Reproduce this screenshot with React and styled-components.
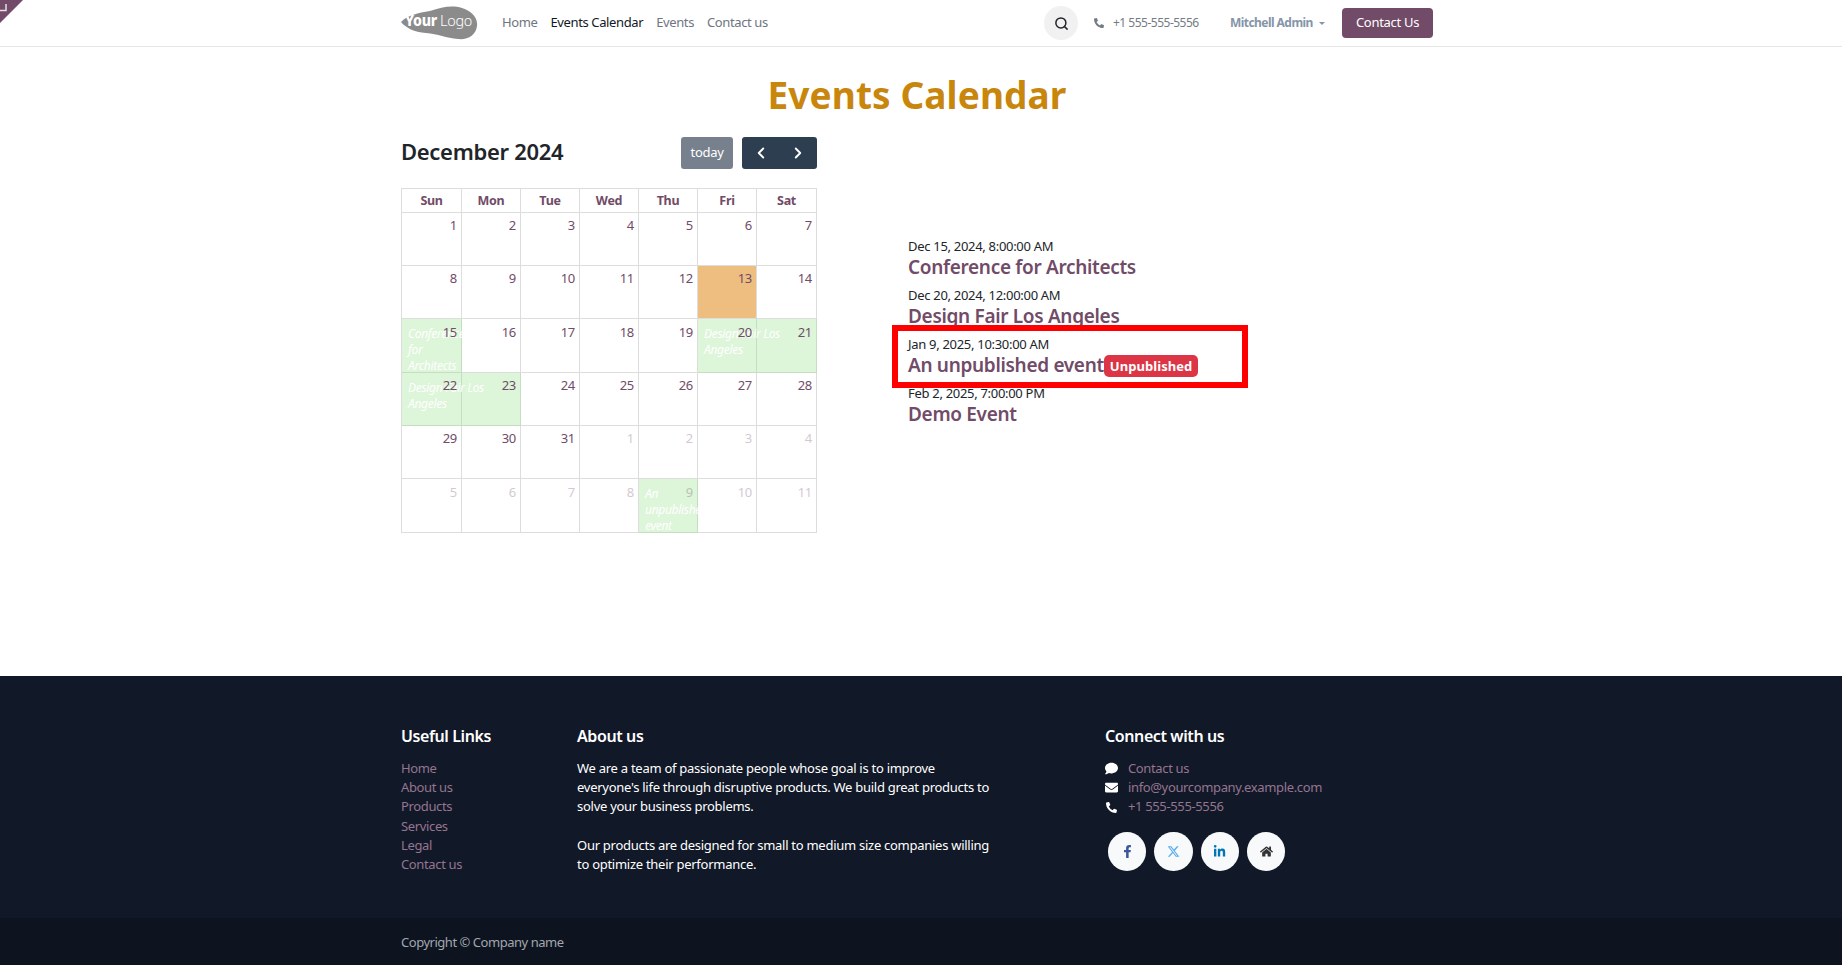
import React from "react";
import styled, { createGlobalStyle } from "styled-components";
import {
  FaComment,
  FaEnvelope,
  FaFacebookF,
  FaHome,
  FaLinkedinIn,
  FaPhoneAlt,
} from "react-icons/fa";
import { FaXTwitter } from "react-icons/fa6";
import { ChevronLeft, ChevronRight, Search } from "lucide-react";

const PURPLE = "#714b67";

const GlobalStyle = createGlobalStyle`
  html, body {
    margin: 0;
    padding: 0;
    background: #fff;
    font-family: "Noto Sans", "Open Sans", sans-serif;
    font-size: 13px;
    line-height: 19.5px;
    color: #212529;
    letter-spacing: -0.3px;
  }
  * { box-sizing: border-box; }
`;

const Page = styled.div`
  position: relative;
  min-height: 965px;
  display: flex;
  flex-direction: column;
`;

const Ribbon = styled.svg`
  position: absolute;
  left: 0;
  top: 0;
`;

const Header = styled.header`
  height: 47px;
  border-bottom: 1px solid #e6e6e6;
  padding: 0 409px 0 400px;
  display: flex;
  align-items: center;
`;

const NavLink = styled.a`
  color: ${(p) => (p.$active ? "#111827" : "#6f7680")};
  margin-right: ${(p) => p.$gap}px;
  letter-spacing: -0.38px;
`;

const Nav = styled.nav`
  display: flex;
  margin-left: 24px;
  flex: 1;
`;

const SearchButton = styled.div`
  width: 34px;
  height: 34px;
  border-radius: 50%;
  background: #f1f1f1;
  color: #212529;
  display: flex;
  align-items: center;
  justify-content: center;
  margin-right: 16px;
`;

const PhoneLink = styled.div`
  display: flex;
  align-items: center;
  gap: 9px;
  color: #737b84;
  font-size: 12px;
  letter-spacing: -0.5px;
  width: 136px;
`;

const UserMenu = styled.div`
  display: flex;
  align-items: center;
  gap: 6px;
  color: #8595a8;
  font-size: 12px;
  font-weight: 700;
  letter-spacing: -0.55px;
  width: 112px;
`;

const Caret = styled.span`
  border-top: 3.5px solid #8595a8;
  border-left: 3.5px solid transparent;
  border-right: 3.5px solid transparent;
`;

const ContactButton = styled.a`
  width: 91px;
  height: 30px;
  border-radius: 4px;
  background: ${PURPLE};
  color: #fff;
  display: flex;
  align-items: center;
  justify-content: center;
`;

const Main = styled.main`
  flex: 1;
  padding: 0 401px;
`;

const Title = styled.h1`
  margin: 26px 0 0;
  padding-right: 8px;
  text-align: center;
  font-size: 37px;
  line-height: 44px;
  font-weight: 700;
  color: #c8860d;
  letter-spacing: 0.1px;
`;

const Columns = styled.div`
  display: grid;
  grid-template-columns: 416px 1fr;
  column-gap: 91px;
`;

const Toolbar = styled.div`
  display: flex;
  align-items: center;
  margin-top: 20px;
  height: 32px;
  margin-bottom: 19px;
`;

const MonthTitle = styled.h2`
  margin: 0 0 2px;
  flex: 1;
  font-size: 22px;
  font-weight: 600;
  color: #212529;
  letter-spacing: -0.3px;
`;

const TodayButton = styled.div`
  width: 52px;
  height: 32px;
  border-radius: 3px;
  background: #77818d;
  color: #fff;
  display: flex;
  align-items: center;
  justify-content: center;
  margin-right: 9px;
`;

const ArrowGroup = styled.div`
  width: 75px;
  height: 32px;
  border-radius: 3px;
  background: #2c3e50;
  color: #fff;
  display: flex;
  align-items: center;
  justify-content: space-around;
`;

const Calendar = styled.div`
  border-top: 1px solid #ddd;
  border-left: 1px solid #ddd;
`;

const Row = styled.div`
  display: grid;
  grid-template-columns: 60px repeat(5, 59px) 60px;
  height: ${(p) => p.$height}px;
`;

const HeadCell = styled.div`
  border-right: 1px solid #ddd;
  border-bottom: 1px solid #ddd;
  text-align: center;
  font-size: 12.5px;
  line-height: 23px;
  font-weight: 700;
  color: ${PURPLE};
`;

const DayCell = styled.div`
  grid-row: 1;
  grid-column: ${(p) => p.$col};
  min-width: 0;
  border-right: 1px solid #ddd;
  border-bottom: 1px solid #ddd;
  padding: ${(p) => (p.$tall ? 4 : 3)}px 4px 0 0;
  text-align: right;
  background: ${(p) => (p.$today ? "#edbe80" : "transparent")};
`;

const DayNumber = styled.span`
  position: relative;
  z-index: 1;
  color: ${PURPLE};
  opacity: ${(p) => (p.$muted ? 0.3 : 1)};
`;

const BgEvent = styled.div`
  grid-row: 1;
  grid-column: ${(p) => p.$col} / span ${(p) => p.$span};
  min-width: 0;
  overflow: hidden;
  background: rgba(143, 223, 130, 0.3);
  color: #fff;
  font-size: 12px;
  line-height: 16px;
  font-style: italic;
  padding: 7px 0 0 6px;
`;

const EventList = styled.div`
  padding-top: 120px;
  display: flex;
  flex-direction: column;
  width: 340px;
`;

const EventItem = styled.div`
  position: relative;
  height: 49px;
`;

const RedFrame = styled.div`
  position: absolute;
  left: -16px;
  top: -10px;
  width: 356px;
  height: 63px;
  border: 6px solid #ff0000;
`;

const EventDate = styled.div`
  font-size: 13px;
  line-height: 19px;
`;

const EventName = styled.a`
  display: flex;
  align-items: center;
  font-size: 19px;
  line-height: 23px;
  font-weight: 600;
  color: ${PURPLE};
  letter-spacing: -0.32px;
`;

const Badge = styled.span`
  height: 22px;
  padding: 0 6px;
  border-radius: 5px;
  background: #dc3545;
  color: #fff;
  font-size: 13px;
  font-weight: 700;
  line-height: 22px;
  letter-spacing: 0.05px;
`;

const Footer = styled.footer`
  background: #111827;
  color: #fff;
  line-height: 19.2px;
`;

const FooterGrid = styled.div`
  height: 242px;
  padding: 48px 401px 0;
  display: grid;
  grid-template-columns: 176px 528px 1fr;
`;

const FooterHeading = styled.h5`
  margin: 0 0 11px;
  font-size: 16px;
  line-height: 24px;
  font-weight: 600;
  color: #fff;
  letter-spacing: -0.4px;
`;

const FooterLink = styled.a`
  display: block;
  color: #957590;
  letter-spacing: -0.36px;
`;

const AboutText = styled.p`
  margin: 0 0 19.2px;
  width: 420px;
  letter-spacing: -0.27px;
`;

const ContactRow = styled.div`
  display: flex;
  align-items: center;
  gap: 10px;
  color: #fff;
  font-size: 13px;
`;

const ContactIcon = styled.span`
  width: 13px;
  display: flex;
  justify-content: center;
`;

const SocialRow = styled.div`
  display: flex;
  gap: 8px;
  margin: 15px 0 0 3px;
`;

const SocialCircle = styled.a`
  width: 38.3px;
  height: 39px;
  border-radius: 50%;
  background: #f8f9fa;
  color: ${(p) => p.$color};
  display: flex;
  align-items: center;
  justify-content: center;
  font-size: 13px;
`;

const Copyright = styled.div`
  height: 47px;
  padding: 2px 401px 0;
  background: #0d1420;
  color: #a2a7ae;
  letter-spacing: -0.47px;
  display: flex;
  align-items: center;
`;

const LogoText = styled.text`
  font-family: "Noto Sans", sans-serif;
  font-size: 15px;
  fill: #fff;
`;

const days = [
  [1, 2, 3, 4, 5, 6, 7],
  [8, 9, 10, 11, 12, 13, 14],
  [15, 16, 17, 18, 19, 20, 21],
  [22, 23, 24, 25, 26, 27, 28],
  [29, 30, 31, 1, 2, 3, 4],
  [5, 6, 7, 8, 9, 10, 11],
];

const rowHeights = [53, 53, 54, 53, 53, 54];

const bgEvents = {
  2: [
    { col: 1, span: 1, title: "Conference for Architects" },
    { col: 6, span: 2, title: "Design Fair Los Angeles" },
  ],
  3: [{ col: 1, span: 2, title: "Design Fair Los Angeles" }],
  5: [{ col: 5, span: 1, title: "An unpublished event" }],
};

const events = [
  { date: "Dec 15, 2024, 8:00:00 AM", name: "Conference for Architects" },
  { date: "Dec 20, 2024, 12:00:00 AM", name: "Design Fair Los Angeles" },
  { date: "Jan 9, 2025, 10:30:00 AM", name: "An unpublished event", draft: true },
  { date: "Feb 2, 2025, 7:00:00 PM", name: "Demo Event" },
];

function isMuted(rowIndex, day) {
  return (rowIndex === 4 && day < 10) || rowIndex === 5;
}

function Logo() {
  return (
    <svg width="78" height="34" viewBox="0 0 78 34">
      <path
        d="M1 16 C8 9 18 7 30 5 C42 1 52 -1 62 2 C72 5 78 12 77 20 C76 29 68 34 58 33 C46 32 38 28 26 27 C14 26 6 22 1 16 Z"
        fill="#8b8b8b"
      />
      <LogoText x="5" y="20" fontWeight="800" textLength="32" lengthAdjust="spacingAndGlyphs">
        Your
      </LogoText>
      <LogoText x="40" y="20" fontWeight="300" textLength="32" lengthAdjust="spacingAndGlyphs">
        Logo
      </LogoText>
    </svg>
  );
}

export default function App() {
  return (
    <Page>
      <GlobalStyle />
      <Ribbon width="24" height="24" viewBox="0 0 24 24">
        <polygon points="0,0 23,0 0,23" fill={PURPLE} />
        <path d="M0 10.5 H6 V4" fill="none" stroke="#e8e0e6" strokeWidth="1.5" />
      </Ribbon>

      <Header>
        <Logo />
        <Nav>
          <NavLink $gap={13}>Home</NavLink>
          <NavLink $gap={13} $active>
            Events Calendar
          </NavLink>
          <NavLink $gap={13}>Events</NavLink>
          <NavLink $gap={0}>Contact us</NavLink>
        </Nav>
        <SearchButton>
          <Search size={15} strokeWidth={2.4} />
        </SearchButton>
        <PhoneLink>
          <FaPhoneAlt size={10} />
          +1 555-555-5556
        </PhoneLink>
        <UserMenu>
          Mitchell Admin
          <Caret />
        </UserMenu>
        <ContactButton>Contact Us</ContactButton>
      </Header>

      <Main>
        <Title>Events Calendar</Title>
        <Columns>
          <div>
            <Toolbar>
              <MonthTitle>December 2024</MonthTitle>
              <TodayButton>today</TodayButton>
              <ArrowGroup>
                <ChevronLeft size={18} strokeWidth={2.5} />
                <ChevronRight size={18} strokeWidth={2.5} />
              </ArrowGroup>
            </Toolbar>
            <Calendar>
              <Row $height={24}>
                {["Sun", "Mon", "Tue", "Wed", "Thu", "Fri", "Sat"].map((d) => (
                  <HeadCell key={d}>{d}</HeadCell>
                ))}
              </Row>
              {days.map((week, rowIndex) => (
                <Row key={rowIndex} $height={rowHeights[rowIndex]}>
                  {week.map((day, i) => (
                    <DayCell
                      key={i}
                      $col={i + 1}
                      $tall={rowHeights[rowIndex] === 54}
                      $today={rowIndex === 1 && day === 13}>
                      <DayNumber $muted={isMuted(rowIndex, day)}>{day}</DayNumber>
                    </DayCell>
                  ))}
                  {(bgEvents[rowIndex] || []).map((ev) => (
                    <BgEvent key={ev.col} $col={ev.col} $span={ev.span}>
                      {ev.title}
                    </BgEvent>
                  ))}
                </Row>
              ))}
            </Calendar>
          </div>
          <EventList>
            {events.map((ev) => (
              <EventItem key={ev.name}>
                <EventDate>{ev.date}</EventDate>
                <EventName>
                  {ev.name}
                  {ev.draft && <Badge>Unpublished</Badge>}
                </EventName>
                {ev.draft && <RedFrame />}
              </EventItem>
            ))}
          </EventList>
        </Columns>
      </Main>

      <Footer>
        <FooterGrid>
          <div>
            <FooterHeading>Useful Links</FooterHeading>
            {["Home", "About us", "Products", "Services", "Legal", "Contact us"].map((l) => (
              <FooterLink key={l}>{l}</FooterLink>
            ))}
          </div>
          <div>
            <FooterHeading>About us</FooterHeading>
            <AboutText>
              We are a team of passionate people whose goal is to improve everyone's life
              through disruptive products. We build great products to solve your business
              problems.
            </AboutText>
            <AboutText>
              Our products are designed for small to medium size companies willing to
              optimize their performance.
            </AboutText>
          </div>
          <div>
            <FooterHeading>Connect with us</FooterHeading>
            <ContactRow>
              <ContactIcon>
                <FaComment />
              </ContactIcon>
              <FooterLink>Contact us</FooterLink>
            </ContactRow>
            <ContactRow>
              <ContactIcon>
                <FaEnvelope />
              </ContactIcon>
              <FooterLink>info@yourcompany.example.com</FooterLink>
            </ContactRow>
            <ContactRow>
              <ContactIcon>
                <FaPhoneAlt size={11} />
              </ContactIcon>
              <FooterLink>+1 555-555-5556</FooterLink>
            </ContactRow>
            <SocialRow>
              <SocialCircle $color="#3b5998">
                <FaFacebookF />
              </SocialCircle>
              <SocialCircle $color="#55acee">
                <FaXTwitter />
              </SocialCircle>
              <SocialCircle $color="#0077b5">
                <FaLinkedinIn />
              </SocialCircle>
              <SocialCircle $color="#333">
                <FaHome />
              </SocialCircle>
            </SocialRow>
          </div>
        </FooterGrid>
        <Copyright>Copyright © Company name</Copyright>
      </Footer>
    </Page>
  );
}
